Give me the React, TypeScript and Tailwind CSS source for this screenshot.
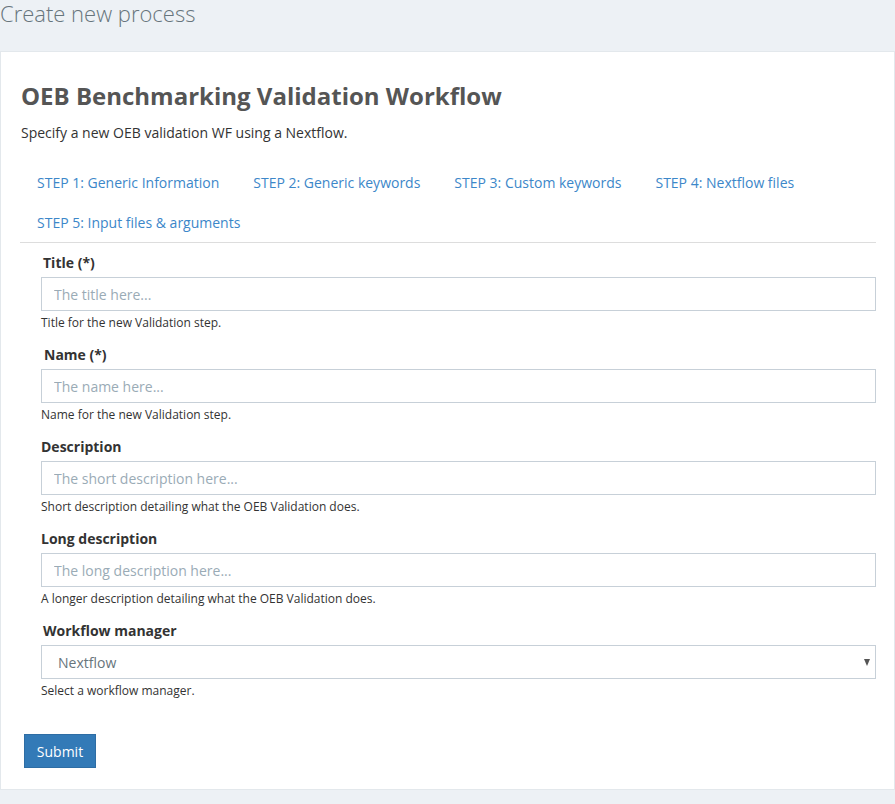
import React from 'react'

const font = { fontFamily: '"Open Sans", "Liberation Sans", sans-serif' }

interface Field {
  label: string
  placeholder: string
  help: string
  indent: string
}

const fields: Field[] = [
  { label: 'Title (*)', placeholder: 'The title here...', help: 'Title for the new Validation step.', indent: 'pl-[2px]' },
  { label: 'Name (*)', placeholder: 'The name here...', help: 'Name for the new Validation step.', indent: 'pl-[3px]' },
  { label: 'Description', placeholder: 'The short description here...', help: 'Short description detailing what the OEB Validation does.', indent: '' },
  { label: 'Long description', placeholder: 'The long description here...', help: 'A longer description detailing what the OEB Validation does.', indent: '' },
]

const steps = [
  'STEP 1: Generic Information',
  'STEP 2: Generic keywords',
  'STEP 3: Custom keywords',
  'STEP 4: Nextflow files',
  'STEP 5: Input files & arguments',
]

export default function App() {
  return (
    <div className="min-h-[804px] bg-[#edf1f5] text-[#333]" style={font}>
      <h1 className="text-[22px] font-light leading-[26px] text-[#67757c]">Create new process</h1>

      <div className="mt-[25px] bg-white border border-[#e3e8ec] pl-[19px] pr-[18px] pt-[28px] pb-[21px]">
        <h2 className="text-[24px] font-bold leading-[32px] text-[#555] pl-[1px]">OEB Benchmarking Validation Workflow</h2>
        <p className="mt-[11px] text-[14px] leading-[20px] pl-[1px]">Specify a new OEB validation WF using a Nextflow.</p>

        {/* Steps */}
        <div className="mt-[19px] flex flex-wrap border-b border-[#ddd] pl-[1px]">
          {steps.map((s) => (
            <a key={s} href="#" className="px-4 h-[40px] mr-[2px] flex items-center text-[14px] text-[#3c87c9]">
              {s}
            </a>
          ))}
        </div>

        {/* Form */}
        <form className="pl-[21px] pt-[9px]">
          {fields.map((f) => (
            <div key={f.label} className="mb-[13px]">
              <label className={`block text-[14px] font-bold leading-[22px] text-[#333] ${f.indent}`}>{f.label}</label>
              <input
                type="text"
                placeholder={f.placeholder}
                className="mt-[3px] block w-full h-[34px] border border-[#c7d0d8] bg-white px-[12px] text-[14px] text-[#67757c] placeholder:text-[#9aabb6] outline-none"
              />
              <p className="mt-[3px] text-[12px] leading-[17px] text-[#333]">{f.help}</p>
            </div>
          ))}

          <div>
            <label className="block text-[14px] font-bold leading-[22px] text-[#333] pl-[2px]">Workflow manager</label>
            <div className="relative mt-[3px]">
              <select className="block w-full h-[34px] appearance-none border border-[#c7d0d8] bg-white pl-[16px] text-[14px] text-[#67757c] outline-none">
                <option>Nextflow</option>
              </select>
              <span className="absolute right-[6px] top-[14px] w-0 h-0 border-l-[3.5px] border-r-[3.5px] border-t-[7px] border-l-transparent border-r-transparent border-t-[#555]" />
            </div>
            <p className="mt-[3px] text-[12px] leading-[17px] text-[#333]">Select a workflow manager.</p>
          </div>
        </form>

        <button
          type="submit"
          className="mt-[35px] ml-[4px] w-[72px] h-[34px] bg-[#337ab7] border border-[#2e6da4] text-white text-[14px]"
        >
          Submit
        </button>
      </div>
    </div>
  )
}
